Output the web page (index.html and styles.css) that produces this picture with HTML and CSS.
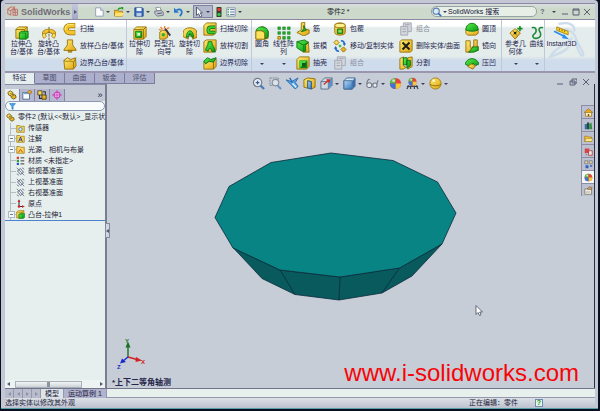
FILE: index.html
```html
<!DOCTYPE html>
<html lang="zh-CN">
<head>
<meta charset="utf-8">
<title>零件2 - SolidWorks</title>
<link rel="stylesheet" href="styles.css">
</head>
<body>
<svg class="defs" aria-hidden="true">
  <defs>
    <linearGradient id="gold" x1="0" y1="0" x2="1" y2="1"><stop offset="0" stop-color="#ffec70"/><stop offset="1" stop-color="#e0a410"/></linearGradient>
    <linearGradient id="green" x1="0" y1="0" x2="1" y2="1"><stop offset="0" stop-color="#5cf04c"/><stop offset="1" stop-color="#0a9a12"/></linearGradient>
    <linearGradient id="blue" x1="0" y1="0" x2="1" y2="1"><stop offset="0" stop-color="#b8dcf8"/><stop offset="1" stop-color="#2f74bc"/></linearGradient>
    <symbol id="extrude" viewBox="0 0 16 16"><path d="M1 4l3-3h10v10l-3 3H1z" fill="url(#gold)" stroke="#94700c"/><path d="M1 4h10v10M11 4l3-3" fill="none" stroke="#94700c"/><path d="M5 8l2-2h8v7l-2 2H5z" fill="url(#green)" stroke="#0b6f14"/><path d="M5 8h7v6" fill="none" stroke="#0b6f14" stroke-width=".7"/></symbol>
    <symbol id="revolve" viewBox="0 0 16 16"><path d="M2 10C2 4 14 4 14 10" fill="none" stroke="#94700c" stroke-width="5"/><path d="M2 10C2 4 14 4 14 10" fill="none" stroke="#f4c42c" stroke-width="3.400"/><path d="M0 10l3-2 2 4-3 2zM16 10l-3-2-2 4 3 2z" fill="#ffe46a" stroke="#94700c" stroke-width=".8"/><path d="M8 1v15" stroke="#64522a" stroke-dasharray="3 1"/></symbol>
    <symbol id="sweep" viewBox="0 0 16 16"><path d="M14 4H8C2 4 2 12 8 12h6" fill="none" stroke="#94700c" stroke-width="6"/><path d="M13.500 4H8C2 4 2 12 8 12h5.500" fill="none" stroke="#f4c42c" stroke-width="4.400"/><path d="M12 3H7C4 3 2 6 3 9" fill="none" stroke="#fff08a"/></symbol>
    <symbol id="loft" viewBox="0 0 16 16"><path d="M5 1h6v5c0 3 4 4 4 7H1c0-3 4-4 4-7z" fill="url(#gold)" stroke="#94700c"/><path d="M6 13h4v2H6z" fill="#d49806" stroke="#94700c"/></symbol>
    <symbol id="boundary" viewBox="0 0 16 16"><path d="M1 5l4-3 4 2 5-2 1 9-3 4H2z" fill="url(#gold)" stroke="#94700c"/><path d="M1 5c4 3 7-1 11 2l3-5M12 7v7" fill="none" stroke="#94700c"/></symbol>
    <symbol id="cut" viewBox="0 0 16 16"><path d="M1 4l3-3h11v11l-3 3H1z" fill="url(#gold)" stroke="#94700c"/><path d="M1 4h11v11M12 4l3-3" fill="none" stroke="#94700c"/><path d="M3 6h7v7H3z" fill="url(#green)" stroke="#0b6f14"/><path d="M5 8h3v3H5z" fill="#e9f7d2"/></symbol>
    <symbol id="hole" viewBox="0 0 16 16"><path d="M2 7l3-2h6v8l-3 2H2z" fill="url(#gold)" stroke="#94700c"/><circle cx="6" cy="10" r="2" fill="#2fae2f"/><path d="M8 3l6 8" stroke="#3d3040" stroke-width="2"/><path d="M3 1l2 3M8 0l-1 3M13 2l-3 1M1 4l3 1" stroke="#ee7a16" stroke-width="1.400"/></symbol>
    <symbol id="revcut" viewBox="0 0 16 16"><path d="M0 8c0-8 16-8 16 0v5l-5 2v-5H6v5l-6-3z" fill="url(#gold)" stroke="#94700c"/><path d="M4 13c0-10 8-10 8 0l-3-1V9H7v3z" fill="url(#green)" stroke="#0b6f14"/></symbol>
    <symbol id="sweepcut" viewBox="0 0 16 16"><path d="M1 4l3-3h11v11l-3 3H1z" fill="url(#gold)" stroke="#94700c"/><path d="M14 6H9C5 6 5 12 9 12h5" fill="none" stroke="#0b6f14" stroke-width="4"/><path d="M14 6H9C5 6 5 12 9 12h5" fill="none" stroke="#38cf34" stroke-width="2.400"/></symbol>
    <symbol id="loftcut" viewBox="0 0 16 16"><path d="M1 3l3-2h11v12l-3 2H1z" fill="url(#gold)" stroke="#94700c"/><path d="M6 3h4c0 5 4 6 4 12l-4-1c0-4-4-4-4 0l-3-1c0-4 3-5 3-10z" fill="url(#green)" stroke="#0b6f14"/></symbol>
    <symbol id="boundcut" viewBox="0 0 16 16"><path d="M1 6h11v9H1zM12 6l3-3v9l-3 3z" fill="url(#gold)" stroke="#94700c"/><path d="M1 6l4-4 4 2 6-2-3 5-5-1-4 3z" fill="url(#green)" stroke="#0b6f14"/></symbol>
    <symbol id="fillet" viewBox="0 0 16 16"><path d="M1 7l6-6h3l5 5v8l-4 1H1z" fill="url(#gold)" stroke="#94700c"/><path d="M1 6c1-4 4-5 7-5 4 0 6 2 7 5v6l-4 3V8C9 5 5 5 1 6z" fill="url(#green)" stroke="#0b6f14"/><path d="M1 6c4-1 8-1 10 2v7H1z" fill="#ffe25e" stroke="#94700c"/></symbol>
    <symbol id="pattern" viewBox="0 0 16 16"><g fill="#22b32a" stroke="#0b6f14" stroke-width=".6"><path d="M1 1h3v3H1zM6.500 1h3v3h-3zM12 1h3v3h-3zM1 6.500h3v3H1zM6.500 6.500h3v3h-3zM12 6.500h3v3h-3zM6.500 12h3v3h-3zM12 12h3v3h-3z"/></g><path d="M1 12h3v3H1z" fill="#f1bb24" stroke="#94700c"/></symbol>
    <symbol id="rib" viewBox="0 0 16 16"><path d="M6 1l4-1v8l5 1v4l-6 3-8-4 5-3z" fill="url(#gold)" stroke="#94700c"/><path d="M9 4v4l-3 3 4-1 2-1c-2-1-3-3-3-5z" fill="url(#green)" stroke="#0b6f14"/></symbol>
    <symbol id="draft" viewBox="0 0 16 16"><path d="M9 5l5-2 1 12H8z" fill="url(#gold)" stroke="#94700c"/><path d="M1 3l9-2 4 3-3 3v7H7l-6-4z" fill="url(#green)" stroke="#0b6f14"/><path d="M1 3l8 4 5-3M9 7v7" fill="none" stroke="#0b6f14"/></symbol>
    <symbol id="shell" viewBox="0 0 16 16"><path d="M1 4l3-3h11v11l-3 3H1z" fill="url(#gold)" stroke="#94700c"/><path d="M4 5h9v9H4z" fill="#11821d"/><path d="M4 5h9l-3 3H7v3l-3 3z" fill="#46d83e"/><path d="M7 8h4v4H7z" fill="#0d5b18"/></symbol>
    <symbol id="wrap" viewBox="0 0 16 16"><path d="M2 4c0-4 12-4 12 0v8c0 4-12 4-12 0z" fill="url(#gold)" stroke="#94700c"/><ellipse cx="8" cy="4" rx="6" ry="2.500" fill="#fff08a" stroke="#94700c"/><path d="M5 8h6v5H5z" fill="#28b72d" stroke="#0b6f14"/><path d="M7 9v3M9 9v3" stroke="#fff08a"/></symbol>
    <symbol id="move" viewBox="0 0 16 16"><path d="M1 4l3-3 3 3-3 3zM9 12l3-3 3 3-3 3z" fill="url(#gold)" stroke="#94700c"/><path d="M9 2c3 0 4 1 4 4M7 14c-3 0-4-1-4-4" fill="none" stroke="#2467cc" stroke-width="1.800"/><path d="M11 5h4l-2 3zM1 11h4L3 8z" fill="#2467cc"/><path d="M6 8l2-2 2 2-2 2z" fill="#3dc23a"/></symbol>
    <symbol id="combine" viewBox="0 0 16 16"><g fill="#d3d6dc" stroke="#9fa3ae"><path d="M5 1h9v10H5z"/><path d="M2 5h8v10H2z"/><path d="M4 8h4M4 11h4M7 3h5" fill="none"/></g></symbol>
    <symbol id="delbody" viewBox="0 0 16 16"><path d="M1 3l2-2h12v12l-2 2H1z" fill="url(#gold)" stroke="#94700c"/><path d="M4 4l8 8M12 4l-8 8" stroke="#1c1c1c" stroke-width="2.200"/></symbol>
    <symbol id="split" viewBox="0 0 16 16"><path d="M1 3l4-2v10l3 2-3 2H1zM10 2l5-1v11l-5 3z" fill="url(#gold)" stroke="#94700c"/><path d="M5 2h4v8H5zM9 5h4v6l-4 3z" fill="url(#green)" stroke="#0b6f14"/></symbol>
    <symbol id="dome" viewBox="0 0 16 16"><path d="M1 8h14v5l-3 2H3l-2-2z" fill="url(#gold)" stroke="#94700c"/><path d="M1 9c0-10 14-10 14 0-3 2-11 2-14 0z" fill="url(#green)" stroke="#0b6f14"/></symbol>
    <symbol id="mirror" viewBox="0 0 16 16"><path d="M1 2h5v7h1v6H1zM10 1h4v7h1v5H9V8h1z" fill="url(#gold)" stroke="#94700c"/><path d="M9 9h6v4l-5 2H4l3-3z" fill="url(#green)" stroke="#0b6f14"/></symbol>
    <symbol id="indent" viewBox="0 0 16 16"><path d="M0 9c3-8 13-8 16 0l-4 2-3-3-4 4z" fill="url(#green)" stroke="#0b6f14"/><path d="M3 12l4-3 5 2-3 4z" fill="url(#gold)" stroke="#94700c"/></symbol>
    <symbol id="refgeo" viewBox="0 0 16 16"><path d="M7 3l6 5-6 7-6-7z" fill="url(#gold)" stroke="#94700c"/><path d="M4 5l6 7M10 5l-6 6" stroke="#94700c" stroke-width=".8"/><path d="M12.500 0v6M9.500 3h6" stroke="#128c1b" stroke-width="1.800"/><circle cx="7" cy="8" r="1.500" fill="#1c1c1c"/></symbol>
    <symbol id="curve" viewBox="0 0 16 16"><path d="M2 2c6-2 6 5 3 7s-2 6 3 5 5-5 3-8 0-5 4-4" fill="none" stroke="#1e8a36" stroke-width="1.800"/></symbol>
    <symbol id="instant" viewBox="0 0 20 16"><path d="M4 1l13 5v4L4 5z" fill="#ffd928" stroke="#a27d0d"/><path d="M7 3v2M10 4v2M13 5v2" stroke="#6a5510"/><path d="M1 6l12 6" stroke="#2c8ff0" stroke-width="2.200"/><path d="M12 9l6 6-8-1z" fill="#2c8ff0"/></symbol>
    <symbol id="swirl" viewBox="0 0 40 38"><path d="M10 3c10-3 16 1 15 7M16 8c8 1 10 6 12 12 4 8 7 12 5 13-3 0-6-9-7-16M23 16C18 22 6 26 2 34c6-2 14-4 18-10" fill="none" stroke="#cddcea" stroke-width="2.200"/></symbol>
    <symbol id="logo" viewBox="0 0 16 14"><path d="M1 4l4-3h5v5M1 4v6l4 2V6zM5 6l5-4" fill="none" stroke="#c97b70" stroke-width="1.400"/><path d="M8 4h6v8H8zM8 8h6M11 4v8" fill="none" stroke="#bd6b62" stroke-width="1.200"/></symbol>
    <symbol id="newdoc" viewBox="0 0 12 12"><path d="M2 1h6l3 3v7H2z" fill="#fff" stroke="#8694b0"/><path d="M8 1v3h3" fill="#dce6f2" stroke="#8694b0"/></symbol>
    <symbol id="open" viewBox="0 0 12 12"><path d="M0 4h4l1 1h5v6H1z" fill="#f2bd34" stroke="#a17413"/><path d="M2 7h10l-2 4H1z" fill="#ffe474"/><path d="M5 4c0-3 3-3 4-2" fill="none" stroke="#219b2a" stroke-width="1.600"/><path d="M8 0h3v4z" fill="#219b2a"/></symbol>
    <symbol id="save" viewBox="0 0 12 12"><path d="M1 1h9l1 1v9H1z" fill="#3469c0" stroke="#20457f"/><path d="M3 1h6v4H3z" fill="#eef4fb"/><path d="M3 7h6v4H3z" fill="#b8cce8"/></symbol>
    <symbol id="print" viewBox="0 0 12 12"><path d="M2 1l5-1 2 5H4z" fill="#fff" stroke="#7d8494"/><path d="M1 5l8-1 3 3-1 3-7 1-3-3z" fill="#c1c6d0" stroke="#676e7e"/><path d="M4 8l6-1" stroke="#3c4352"/></symbol>
    <symbol id="undo" viewBox="0 0 12 12"><path d="M3 4c5-3 9 1 4 7" fill="none" stroke="#2b74cf" stroke-width="2.200"/><path d="M0 1v6h6z" fill="#2b74cf"/></symbol>
    <symbol id="pointer" viewBox="0 0 12 12"><path d="M3 0v10l2.500-2 2 4 2-1-2-4H10z" fill="#fff" stroke="#444b66"/></symbol>
    <symbol id="traffic" viewBox="0 0 12 12"><rect x="3" y="0" width="6" height="12" rx="1" fill="#333b38"/><circle cx="6" cy="3" r="2" fill="#f0382c"/><circle cx="6" cy="9" r="2" fill="#38c440"/></symbol>
    <symbol id="options" viewBox="0 0 12 12"><path d="M1 1h10v10H1z" fill="#eef3f8" stroke="#7e8ba4"/><path d="M5 3h5M5 6h5M5 9h5" stroke="#4c6a96"/><path d="M2 3h1.500M2 6h1.500M2 9h1.500" stroke="#2e9a3c" stroke-width="1.500"/></symbol>
    <symbol id="lens" viewBox="0 0 12 12"><circle cx="5" cy="5" r="3.700" fill="#d6ebf8" stroke="#5f7fa8" stroke-width="1.400"/><path d="M7.500 7.500L11 11" stroke="#2f6fc0" stroke-width="2"/></symbol>
    <symbol id="zoomfit" viewBox="0 0 14 14"><circle cx="6" cy="6" r="4.500" fill="#e6edf3" stroke="#747c8a" stroke-width="1.300"/><path d="M4 6h4M6 4v4" stroke="#3d5f90" stroke-width="1.300"/><path d="M9 9l4 4" stroke="#4a7cb8" stroke-width="2.400"/></symbol>
    <symbol id="zoomarea" viewBox="0 0 14 14"><path d="M1 1h9v8H1z" fill="none" stroke="#7e8694" stroke-dasharray="2 1"/><circle cx="7" cy="6" r="3.500" fill="#dce4ea" stroke="#8a919e" stroke-width="1.300"/><path d="M9 9l4 4" stroke="#6c94c4" stroke-width="2.200"/></symbol>
    <symbol id="prev" viewBox="0 0 14 14"><path d="M0 3l6 2 7-4-3 5 3 4-3 3-5-5z" fill="#58a4e4" stroke="#2a6cb0"/><path d="M4 1l3 5" stroke="#2a6cb0" stroke-width="1.500"/><path d="M7 7l4 4" stroke="#e8f6ff" stroke-width="1.500"/></symbol>
    <symbol id="section" viewBox="0 0 14 14"><path d="M1 3l4-2 8 1v9l-4 2V5L5 4v8l-4-1z" fill="url(#gold)" stroke="#94700c"/><path d="M5 4l4 1v8l-4-1z" fill="url(#blue)" stroke="#285f95"/></symbol>
    <symbol id="orient" viewBox="0 0 14 14"><path d="M1 5l4-4h8v8l-4 4H1z" fill="#cfd9e4" stroke="#5d6f88"/><path d="M1 5h8v8M9 5l4-4" fill="none" stroke="#5d6f88"/><path d="M9 5l4-4v8l-4 4z" fill="#5a92c8"/><path d="M4 8l6-5M7 3h3v3" stroke="#d33024" stroke-width="1.400" fill="none"/></symbol>
    <symbol id="display" viewBox="0 0 14 14"><path d="M1 4l3-3h9v9l-3 3H1z" fill="#d2e5f5" stroke="#456a95"/><path d="M1 4h9v9H1z" fill="url(#blue)" stroke="#456a95"/><path d="M10 4l3-3v9l-3 3z" fill="#3a6fac"/></symbol>
    <symbol id="glasses" viewBox="0 0 16 14"><circle cx="4" cy="9" r="3" fill="#e6ecf0" stroke="#727b89" stroke-width="1.300"/><circle cx="11" cy="9" r="2.600" fill="#e6ecf0" stroke="#727b89" stroke-width="1.300"/><path d="M1 8c0-4 2-7 4-6M13 8l2-5M7 8h2" fill="none" stroke="#727b89" stroke-width="1.300"/></symbol>
    <symbol id="ball" viewBox="0 0 14 14"><circle cx="7" cy="7" r="6" fill="#e7433a"/><path d="M7 7V1a6 6 0 0 0-6 6z" fill="#4fbf49"/><path d="M7 7h6a6 6 0 0 1-6 6z" fill="#f6ca32"/><path d="M7 7H1a6 6 0 0 0 6 6z" fill="#3e74d8"/><circle cx="5" cy="4" r="1.500" fill="#fff" opacity=".7"/></symbol>
    <symbol id="scene" viewBox="0 0 14 14"><use href="#ball" x="2" y="0" width="10" height="10"/><path d="M1 13l2-4M5 13V10M9 13v-3M13 13l-2-4M1 10h12" stroke="#3a4450" stroke-width="1.300"/></symbol>
    <symbol id="sphere" viewBox="0 0 14 14"><circle cx="7" cy="7" r="6" fill="url(#gold)" stroke="#a17c14"/><path d="M1 8c3 2 9 2 12 0" stroke="#8c6910" fill="none"/><circle cx="5" cy="4" r="1.500" fill="#fff8c8"/></symbol>
    <symbol id="part" viewBox="0 0 12 12"><path d="M1 3l3-2 3 2v2l3 1 1 3-3 2-3-2V7L2 6z" fill="url(#gold)" stroke="#6b4f08"/><path d="M4 4l3 2M6 8l2-2" stroke="#6b4f08"/></symbol>
    <symbol id="props" viewBox="0 0 12 12"><path d="M1 3h8v8H1z" fill="#fff" stroke="#3c6496"/><path d="M2 3h7v2H2z" fill="#6fa7dc"/><path d="M6 3l3-3 3 2-2 3z" fill="#e5a63c" stroke="#8a5e12" stroke-width=".7"/></symbol>
    <symbol id="config" viewBox="0 0 12 12"><path d="M1 1h5v5H1zM6 6h5v5H6z" fill="url(#gold)" stroke="#4c3c10"/><path d="M3 6v4h3M7 2h3v4" fill="none" stroke="#333" stroke-width="1.300"/></symbol>
    <symbol id="target" viewBox="0 0 12 12"><circle cx="6" cy="6" r="3.500" fill="#f8c6f0" stroke="#c63cb8" stroke-width="1.300"/><path d="M6 0v12M0 6h12" stroke="#c63cb8"/></symbol>
    <symbol id="funnel" viewBox="0 0 12 12"><path d="M1 1h10L7 6v5l-2-1V6z" fill="#4aa6ec" stroke="#2370b4"/></symbol>
    <symbol id="folder" viewBox="0 0 12 12"><path d="M1 2h4l1 1h5v8H1z" fill="#f8d65c" stroke="#a17b18"/></symbol>
    <symbol id="openfolder" viewBox="0 0 12 12"><path d="M1 3h4l1 1h4v6H1z" fill="#f0c044" stroke="#a17b18"/><path d="M3 6h9l-2 4H1z" fill="#ffeb90" stroke="#a17b18" stroke-width=".7"/></symbol>
    <symbol id="sensor" viewBox="0 0 12 12"><use href="#folder"/><circle cx="6" cy="7" r="2.300" fill="#d6eaf8" stroke="#3d6ea8"/></symbol>
    <symbol id="note" viewBox="0 0 12 12"><use href="#folder"/><path d="M3.500 10L6 4l2.500 6M4.500 8h3" fill="none" stroke="#263c8c" stroke-width="1.200"/></symbol>
    <symbol id="light" viewBox="0 0 12 12"><use href="#folder"/><path d="M3 10l3-4 3 4" fill="none" stroke="#cc4a18" stroke-width="1.300"/></symbol>
    <symbol id="material" viewBox="0 0 12 12"><path d="M1 1h3v3H1z" fill="#e13a30"/><path d="M1 5h3v3H1z" fill="#28a132"/><path d="M1 9h3v3H1z" fill="#2d58cf"/><path d="M6 2.500h5M6 6.500h5M6 10.500h5" stroke="#333" stroke-width="1.300"/></symbol>
    <symbol id="plane" viewBox="0 0 12 12"><path d="M2 5l4-3 4 5-4 3z" fill="none" stroke="#5c6577" stroke-width="1.200"/><path d="M1 1l10 10M8 1l3 2M1 9l3 2" stroke="#5c6577"/></symbol>
    <symbol id="origin" viewBox="0 0 12 12"><path d="M4 1v9h7" fill="none" stroke="#333" stroke-width="1.400"/><path d="M2 4l2-3 2 3M8 8l3 2-3 2" fill="#d32222"/><circle cx="4" cy="10" r="1.700" fill="#d32222"/></symbol>
    <symbol id="house" viewBox="0 0 12 12"><path d="M2 6v5h8V6" fill="#fff3b8" stroke="#9c7a20"/><path d="M0 6l6-5 6 5z" fill="#e8a820" stroke="#8c6410" stroke-width=".7"/><path d="M5 8h2v3H5z" fill="#9a4c18"/></symbol>
    <symbol id="library" viewBox="0 0 12 12"><path d="M1 4h3v7H1z" fill="#2d70a8"/><path d="M4 2h3v9H4z" fill="#31473d"/><path d="M7 4l3-2 1 9H7z" fill="#2d9348"/></symbol>
    <symbol id="redbox" viewBox="0 0 12 12"><path d="M1 2h6v6H1z" fill="#d84242"/><path d="M6 5h5v6H6z" fill="#f0e8e8" stroke="#b52d2d"/><path d="M2 9l2 2" stroke="#555"/></symbol>
    <symbol id="palette" viewBox="0 0 12 12"><path d="M1 1h4v4H1zM7 1h4v4H7z" fill="#e5d690" stroke="#6b7592"/><path d="M2 7h4v4H2z" fill="#3460c0"/><path d="M8 8h3" stroke="#3460c0" stroke-width="2"/></symbol>
    <symbol id="custom" viewBox="0 0 12 12"><path d="M1 4h9v7H1z" fill="#f2efe4" stroke="#7a7466"/><path d="M2 8h6" stroke="#9a9486"/><path d="M4 4l3-3 4 1-2 3z" fill="#c89c68" stroke="#7a5c3a" stroke-width=".7"/></symbol>
  </defs>
</svg>

<div class="app">
  <header class="titlebar">
    <button class="brand"><svg class="logo"><use href="#logo"/></svg><span>SolidWorks</span><span class="brand-arrow"><i class="arrow right"></i></span></button>
    <div class="quick">
      <button class="tool drop" aria-label="新建"><svg><use href="#newdoc"/></svg></button>
      <button class="tool drop" aria-label="打开"><svg><use href="#open"/></svg></button>
      <button class="tool drop" aria-label="保存"><svg><use href="#save"/></svg></button>
      <button class="tool drop" aria-label="打印"><svg><use href="#print"/></svg></button>
      <button class="tool drop" aria-label="撤消"><svg><use href="#undo"/></svg></button>
      <button class="tool drop pressed" aria-label="选择"><svg><use href="#pointer"/></svg></button>
      <button class="tool" aria-label="重建模型"><svg><use href="#traffic"/></svg></button>
      <button class="tool drop" aria-label="选项"><svg><use href="#options"/></svg></button>
    </div>
    <h1>零件2 *</h1>
    <label class="search"><svg><use href="#lens"/></svg><i class="caret"></i><input type="text" value="SolidWorks 搜索" aria-label="搜索"></label>
    <div class="winbtns">
      <button>?</button><button aria-label="帮助菜单"><i class="caret"></i></button>
      <button aria-label="最小化"><svg viewBox="0 0 8 8"><path d="M1 6h6"/></svg></button>
      <button aria-label="最大化"><svg viewBox="0 0 8 8"><path d="M1 1h6v6H1zM1 2h6"/></svg></button>
      <button aria-label="关闭"><svg viewBox="0 0 8 8"><path d="M1 1l6 6M7 1L1 7"/></svg></button>
    </div>
  </header>

  <nav class="ribbon">
    <div class="group">
      <button class="big w27"><svg><use href="#extrude"/></svg>拉伸凸<br>台/基体</button>
      <button class="big w27"><svg><use href="#revolve"/></svg>旋转凸<br>台/基体</button>
      <div class="stack w64">
        <button><svg><use href="#sweep"/></svg>扫描</button>
        <button><svg><use href="#loft"/></svg>放样凸台/基体</button>
        <button><svg><use href="#boundary"/></svg>边界凸台/基体</button>
      </div>
    </div>
    <div class="group">
      <button class="big w25"><svg><use href="#cut"/></svg>拉伸切<br>除</button>
      <button class="big w25"><svg><use href="#hole"/></svg>异型孔<br>向导</button>
      <button class="big w25"><svg><use href="#revcut"/></svg>旋转切<br>除</button>
      <div class="stack w49">
        <button><svg><use href="#sweepcut"/></svg>扫描切除</button>
        <button><svg><use href="#loftcut"/></svg>放样切割</button>
        <button><svg><use href="#boundcut"/></svg>边界切除</button>
      </div>
    </div>
    <div class="group">
      <button class="big w20"><svg><use href="#fillet"/></svg>圆角<i class="caret"></i></button>
      <button class="big w23"><svg><use href="#pattern"/></svg>线性阵<br>列<i class="caret"></i></button>
      <div class="stack w37">
        <button><svg><use href="#rib"/></svg>筋</button>
        <button><svg><use href="#draft"/></svg>拔模</button>
        <button><svg><use href="#shell"/></svg>抽壳</button>
      </div>
      <div class="stack w66">
        <button><svg><use href="#wrap"/></svg>包覆</button>
        <button><svg><use href="#move"/></svg>移动/复制实体</button>
        <button disabled><svg><use href="#combine"/></svg>组合</button>
      </div>
      <div class="stack w66">
        <button disabled><svg><use href="#combine"/></svg>组合</button>
        <button><svg><use href="#delbody"/></svg>删除实体/曲面</button>
        <button><svg><use href="#split"/></svg>分割</button>
      </div>
      <div class="stack w37">
        <button><svg><use href="#dome"/></svg>圆顶</button>
        <button><svg><use href="#mirror"/></svg>镜向</button>
        <button><svg><use href="#indent"/></svg>压凹</button>
      </div>
    </div>
    <div class="group">
      <button class="big w27"><svg><use href="#refgeo"/></svg>参考几<br>何体<i class="caret"></i></button>
      <button class="big w15"><svg><use href="#curve"/></svg>曲线<i class="caret"></i></button>
    </div>
    <div class="group last">
      <svg class="swirl"><use href="#swirl"/></svg>
      <button class="big instant"><svg><use href="#instant"/></svg>Instant3D</button>
    </div>
  </nav>

  <div class="tabs">
    <button class="on">特征</button><button>草图</button><button>曲面</button><button>钣金</button><button>评估</button>
  </div>

  <div class="work">
    <aside class="panel">
      <div class="ptabs">
        <button class="on" aria-label="设计树"><svg><use href="#part"/></svg></button>
        <button aria-label="属性"><svg><use href="#props"/></svg></button>
        <button aria-label="配置"><svg><use href="#config"/></svg></button>
        <button aria-label="尺寸专家"><svg><use href="#target"/></svg></button>
        <button class="more">»</button>
      </div>
      <label class="filter"><svg><use href="#funnel"/></svg><input type="text" aria-label="过滤"></label>
      <ul class="tree">
        <li class="root"><svg><use href="#part"/></svg>零件2 (默认&lt;&lt;默认&gt;_显示状</li>
        <li><svg><use href="#sensor"/></svg>传感器</li>
        <li class="plus"><svg><use href="#note"/></svg>注解</li>
        <li class="plus"><svg><use href="#light"/></svg>光源、相机与布景</li>
        <li><svg><use href="#material"/></svg>材质 &lt;未指定&gt;</li>
        <li><svg><use href="#plane"/></svg>前视基准面</li>
        <li><svg><use href="#plane"/></svg>上视基准面</li>
        <li><svg><use href="#plane"/></svg>右视基准面</li>
        <li><svg><use href="#origin"/></svg>原点</li>
        <li class="plus"><svg><use href="#extrude"/></svg>凸台-拉伸1</li>
      </ul>
      <div class="hscroll"><i class="arrow left"></i><div class="track"><div class="thumb"></div></div><i class="arrow right"></i></div>
      <i class="knob"><i class="arrow left"></i></i>
    </aside>

    <main class="view">
      <svg class="model" viewBox="107 85 487 303" preserveAspectRatio="xMidYMid meet">
        <g stroke="#0a2a3c" stroke-width=".8" stroke-linejoin="round">
          <path d="M233 248L262 279 295 295 339 300.500 382 293.500 412 276.500 442 244.500 400 268 340 277.500 280 270.500z" fill="#085a5c"/>
          <path d="M215 218L229 187 271 163 331 153.500 393 161 437.500 182.500 456 213.500 442 244.500 399.500 268.500 340 277.500 280 270.500 233 248.500z" fill="#088484"/>
          <path d="M280 270.500L295 295M340 277.500L339 300.500M399.500 268.500L382 293.500" fill="none"/>
        </g>
        <g stroke-width="1.400">
          <path d="M128 357.500V345" stroke="#17731f"/><path d="M125.500 348l2.500-6 2.500 6z" fill="#17731f"/>
          <path d="M128 357.500l9 2.500" stroke="#d42020"/><path d="M136 357.500l6 3.500-6.500 1.500z" fill="#d42020"/>
          <path d="M128 357.500l-5 4" stroke="#1a2ccc"/><path d="M120 364l2-5 4 3.500z" fill="#1a2ccc"/>
        </g>
        <text class="axis y" x="125" y="343">Y</text><text class="axis x" x="141" y="364">X</text><text class="axis z" x="117" y="369">Z</text>
        <path d="M476 306v9l2-2 1.500 3 1.500-.7-1.300-2.800h2.800z" fill="#fff" stroke="#454b60" stroke-width=".8"/>
      </svg>
      <div class="hud">
        <button aria-label="整屏显示"><svg><use href="#zoomfit"/></svg></button>
        <button aria-label="局部放大"><svg><use href="#zoomarea"/></svg></button>
        <button aria-label="上一视图"><svg><use href="#prev"/></svg></button>
        <button aria-label="剖面视图"><svg><use href="#section"/></svg></button>
        <button class="drop" aria-label="视图定向"><svg><use href="#orient"/></svg></button>
        <button class="drop" aria-label="显示样式"><svg><use href="#display"/></svg></button>
        <button class="drop" aria-label="隐藏项目"><svg><use href="#glasses"/></svg></button>
        <button aria-label="编辑外观"><svg><use href="#ball"/></svg></button>
        <button class="drop" aria-label="应用布景"><svg><use href="#scene"/></svg></button>
        <button class="drop" aria-label="视图设定"><svg><use href="#sphere"/></svg></button>
      </div>
      <div class="docbtns">
        <button aria-label="最小化文档"><svg viewBox="0 0 8 8"><path d="M1 6h6"/></svg></button>
        <button aria-label="还原文档"><svg viewBox="0 0 8 8"><path d="M3 1h5v4H3zM1 3h5v4H1z"/></svg></button>
        <button aria-label="关闭文档"><svg viewBox="0 0 8 8"><path d="M1 1l6 6M7 1L1 7"/></svg></button>
      </div>
      <div class="taskpane">
        <button aria-label="资源"><svg><use href="#house"/></svg></button>
        <button aria-label="设计库"><svg><use href="#library"/></svg></button>
        <button aria-label="文件探索器"><svg><use href="#openfolder"/></svg></button>
        <button aria-label="搜索"><svg><use href="#redbox"/></svg></button>
        <button aria-label="视图调色板"><svg><use href="#palette"/></svg></button>
        <button class="on" aria-label="外观"><svg><use href="#ball"/></svg></button>
        <button aria-label="自定义属性"><svg><use href="#custom"/></svg></button>
      </div>
      <p class="viewname">*上下二等角轴测</p>
      <p class="url">www.i-solidworks.com</p>
    </main>
  </div>

  <div class="sheets">
    <button aria-label="第一个"><i class="arrow left"></i></button><button aria-label="上一个"><i class="arrow left"></i></button><button aria-label="下一个"><i class="arrow right"></i></button><button aria-label="最后一个"><i class="arrow right"></i></button>
    <button class="sheet on">模型</button><button class="sheet">运动算例 1</button>
    <span class="rest"></span>
  </div>
  <footer class="status"><span>选择实体以修改其外观</span><span class="editing">正在编辑：零件</span><button class="help" aria-label="帮助">?</button></footer>
</div>
</body>
</html>
```
FILE: styles.css
```css
* { box-sizing: border-box; }

body {
  margin: 0;
  height: 100vh;
  padding: 0 2px 2px 1px;
  background: #0a1020;
  font-family: "Liberation Sans", "Noto Sans CJK SC", sans-serif;
  font-size: 7px;
  line-height: 8px;
  color: #24244c;
}

svg { display: block; flex: none; }
.defs { position: absolute; width: 0; height: 0; }

button {
  margin: 0;
  padding: 0;
  border: 0;
  background: none;
  font: inherit;
  color: inherit;
  white-space: nowrap;
}

input {
  min-width: 0;
  flex: 1;
  margin: 0;
  padding: 0;
  border: 0;
  background: none;
  font: inherit;
  color: #16163a;
}

.app {
  height: 100%;
  display: flex;
  flex-direction: column;
  padding: 3px 3px 0 4px;
  background: #c3c8d4;
  border-radius: 4px 4px 0 0;
  border-bottom: 1px solid #58a0a8;
}

.caret {
  width: 0;
  height: 0;
  border: 2px solid transparent;
  border-top-color: #3c3c5c;
  border-bottom: 0;
}

.arrow {
  width: 0;
  height: 0;
  border: 2px solid transparent;
}
.arrow.left { border-right: 3px solid #56586c; border-left: 0; }
.arrow.right { border-left: 3px solid #56586c; border-right: 0; }

/* Title bar */
.titlebar {
  flex: none;
  height: 17px;
  display: flex;
  align-items: center;
  border: 1px solid #8c88a4;
  border-width: 1px 0;
  background: linear-gradient(#d8dfe0, #cddacb 30%, #cddacb);
}

.brand {
  height: 15px;
  display: flex;
  align-items: center;
  gap: 2px;
  padding-left: 2px;
  background: #c9d2c8;
  font-weight: bold;
  font-size: 9px;
  color: #6f6d76;
}
.logo { width: 12px; height: 11px; }
.brand-arrow {
  height: 15px;
  width: 6px;
  display: grid;
  place-items: center;
  background: linear-gradient(#c6c6de, #a7a7c8);
}

.quick { display: flex; align-items: center; margin-left: 15px; }
.tool { display: flex; align-items: center; height: 13px; padding: 0 1px; }
.tool svg { width: 10px; height: 10px; }
.tool.drop { padding: 0 3px 0 1px; }
.drop::after {
  content: "";
  margin-left: 2px;
  border: 2px solid transparent;
  border-top-color: #3c3c5c;
  border-bottom: 0;
}
.tool.pressed { background: #b4b8cc; outline: 1px solid #8080a0; outline-offset: -1px; }

.titlebar h1 {
  flex: 1;
  margin: 0;
  text-align: center;
  font-size: 7px;
  font-weight: normal;
  color: #24242c;
}

.search {
  width: 106px;
  height: 11px;
  display: flex;
  align-items: center;
  gap: 1px;
  border: 1px solid #98a4a4;
  border-radius: 5px;
  background: #e6eee6;
}
.search svg { width: 10px; height: 10px; }
.winbtns { display: flex; align-items: center; padding-right: 3px; font-weight: bold; color: #63637b; }
.winbtns button { width: 11px; display: grid; place-items: center; }
.winbtns svg, .docbtns svg {
  width: 8px;
  height: 8px;
  fill: none;
  stroke: #5c5c74;
}

/* Command ribbon */
.ribbon {
  flex: none;
  height: 53px;
  display: flex;
  padding-left: 3px;
  background: linear-gradient(#fff 0, #fdfefe 6px, #e5edec 8px, #e5edec 36px, #cfdceb 40px, #cfdceb);
  border-bottom: 2px solid #9a96b0;
}
.group { display: flex; }
.group + .group { border-left: 1px solid #c0c8d8; }
.last { position: relative; flex: 1; }
.swirl { position: absolute; left: 3px; top: 1px; width: 42px; height: 40px; }

.big {
  position: relative;
  display: grid;
  grid-template-rows: 14px auto 1fr;
  justify-items: center;
  align-content: start;
  padding: 6px 0;
  text-align: center;
}
.big svg { width: 14px; height: 14px; }
.big .caret { position: absolute; bottom: 6px; left: 50%; margin-left: -2px; }
.instant { width: 33px; }
.instant svg { width: 18px; }

.stack { display: grid; grid-template-rows: repeat(3, 17px); padding-left: 1px; }
.stack button { display: flex; align-items: center; gap: 3px; }
.stack svg { width: 14px; height: 14px; }
.stack button:disabled { color: #8c90a0; }

.w15 { width: 15px; }
.w20 { width: 20px; }
.w23 { width: 23px; }
.w25 { width: 25px; }
.w27 { width: 27px; }
.w37 { width: 37px; }
.w49 { width: 49px; }
.w64 { width: 64px; }
.w66 { width: 66px; }

/* Ribbon tabs */
.tabs { flex: none; height: 11px; display: flex; background: #c6cdd6; }
.tabs button {
  width: 30px;
  background: #adb0cc;
  border: 1px solid #7c7c9c;
  border-width: 0 1px 1px 0;
  color: #4c4c68;
}
.tabs .on { background: #e6efee; border-bottom-color: #e6efee; color: #24244c; }

/* Work area */
.work { flex: 1; min-height: 0; display: flex; }

.panel {
  position: relative;
  flex: none;
  width: 102px;
  display: flex;
  flex-direction: column;
  border-top: 1px solid #8c8ca8;
  border-right: 2px solid #7c7c90;
  background: #e6efee;
}
.ptabs { height: 16px; display: flex; padding-top: 4px; background: #c2c8d4; }
.ptabs button {
  width: 15px;
  display: grid;
  place-items: center;
  background: #b6b8d0;
  border-right: 1px solid #8484a4;
}
.ptabs svg { width: 10px; height: 10px; }
.ptabs .on { background: #e6efee; }
.ptabs .more { margin-left: auto; width: 10px; background: none; border: 0; font-size: 9px; }

.filter {
  height: 10px;
  display: flex;
  align-items: center;
  padding-left: 3px;
  border: 1px solid #8c98b4;
  border-radius: 5px;
  background: #f8fcfc;
}
.filter svg { width: 7px; height: 7px; }

.tree {
  height: 110px;
  display: grid;
  grid-auto-rows: 1fr;
  margin: 0;
  padding: 1px 0 0;
  list-style: none;
  border-bottom: 1px solid #4c84cc;
  color: #1c1c34;
}
.tree li {
  position: relative;
  display: flex;
  align-items: center;
  gap: 3px;
  padding-left: 11px;
  white-space: nowrap;
}
.tree li::before {
  content: "";
  position: absolute;
  left: 5px;
  top: 0;
  bottom: 0;
  width: 5px;
  border-left: 1px solid #b4bcc4;
  background: linear-gradient(#b4bcc4, #b4bcc4) center / 100% 1px no-repeat;
}
.tree .root { padding-left: 1px; }
.tree .root::before { display: none; }
.tree .plus::after {
  content: "";
  position: absolute;
  left: 3px;
  width: 5px;
  height: 5px;
  border: 1px solid #b0b8c2;
  background: linear-gradient(#747890, #747890) center / 3px 1px no-repeat #f4f8f8;
}
.tree svg { width: 9px; height: 9px; }

.hscroll {
  height: 8px;
  display: flex;
  align-items: center;
  gap: 5px;
  margin-top: auto;
  padding: 0 2px;
  background: #edf2f2;
}
.track { flex: 1; }
.thumb {
  width: 84%;
  height: 7px;
  border: 1px solid #a8b0b8;
  background: linear-gradient(90deg, transparent 48%, #8c94a0 48%, #8c94a0 52%, transparent 52%), linear-gradient(#f4f6f6, #ccd2d6);
}
.knob {
  position: absolute;
  right: -5px;
  top: 138px;
  width: 5px;
  height: 15px;
  display: grid;
  place-items: center;
  z-index: 1;
  background: #d0d6e0;
  border: 1px solid #8888a0;
}

.view { position: relative; flex: 1; min-width: 0; background: #c6cdd6; border-right: 1px solid #2c3040; }
.model { width: 100%; height: 100%; }
.axis { font-size: 6px; font-weight: bold; }
.axis.x { fill: #d42020; }
.axis.y { fill: #17731f; }
.axis.z { fill: #1a2ccc; }

.hud { position: absolute; left: 145px; top: -7px; display: flex; gap: 4px; }
.hud button { display: flex; align-items: center; }
.hud svg { width: 13px; height: 13px; }
.docbtns { position: absolute; right: 4px; top: -6px; display: flex; gap: 5px; }

.taskpane { position: absolute; right: 0; top: 21px; display: flex; flex-direction: column; }
.taskpane button {
  width: 13px;
  height: 13px;
  display: grid;
  place-items: center;
  background: #bcc0d0;
  border: 1px solid #8c8ca4;
  border-width: 1px 0 0 1px;
}
.taskpane .on { background: #f4f8f8; }
.taskpane svg { width: 9px; height: 9px; }

.viewname { position: absolute; left: 5px; bottom: 1px; margin: 0; font-size: 8px; font-weight: bold; }
.url {
  position: absolute;
  right: 15px;
  bottom: 2px;
  margin: 0;
  font-size: 24px;
  line-height: 26px;
  color: #f80408;
}

/* Sheet tabs and status bar */
.sheets { flex: none; height: 10px; display: flex; border-top: 1px solid #74748c; background: #c2c8d4; }
.sheets button {
  width: 9px;
  display: grid;
  place-items: center;
  border-right: 1px solid #9498ac;
  background: #b8bccc;
  color: #1c1c3c;
}
.sheets .arrow { opacity: .4; }
.sheets .sheet { width: auto; padding: 0 4px; background: #b0b2ce; }
.sheets .sheet.on { background: #dce4e8; }
.rest { flex: 1; background: #e8f0ee; border-bottom: 1px solid #9498ac; }

.status {
  flex: none;
  height: 10px;
  display: flex;
  align-items: center;
  background: linear-gradient(#dce0e6, #bcc2ce);
  color: #24243c;
}
.editing { margin-left: auto; }
.help {
  width: 8px;
  height: 8px;
  margin: 0 52px 0 17px;
  border: 1px solid #6c8cac;
  background: #e4f4e8;
  font-weight: bold;
  line-height: 6px;
  color: #109020;
}
```
